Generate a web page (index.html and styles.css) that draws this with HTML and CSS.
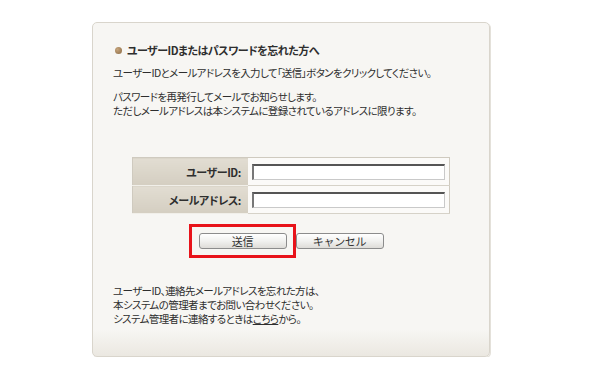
FILE: index.html
```html
<!DOCTYPE html>
<html lang="ja">
<head>
    <meta charset="UTF-8">
    <meta name="viewport" content="width=device-width, initial-scale=1.0">
    <title>パスワード再発行</title>
    <link rel="stylesheet" href="styles.css">
</head>
<body>
    <div class="panel">
        <h2 class="title"><span class="dot"></span>ユーザーIDまたはパスワードを忘れた方へ</h2>
        <p class="lead">ユーザーIDとメールアドレスを入力して「送信」ボタンをクリックしてください。</p>
        <p class="note">パスワードを再発行してメールでお知らせします。<br>ただしメールアドレスは本システムに登録されているアドレスに限ります。</p>

        <table class="form">
            <tr>
                <th>ユーザーID:</th>
                <td><input type="text" class="field"></td>
            </tr>
            <tr>
                <th>メールアドレス:</th>
                <td><input type="text" class="field"></td>
            </tr>
        </table>

        <div class="buttons">
            <span class="mark"><button class="btn">送信</button></span>
            <button class="btn">キャンセル</button>
        </div>

        <p class="help">ユーザーID、連絡先メールアドレスを忘れた方は、<br>本システムの管理者までお問い合わせください。<br>システム管理者に連絡するときは<a href="#">こちら</a>から。</p>
    </div>
</body>
</html>
```

FILE: styles.css
```css
body {
    margin: 0;
    padding: 0;
    background: #fff;
    font-family: "Noto Sans CJK JP", "Noto Sans", sans-serif;
    font-size: 10.5px;
    letter-spacing: -0.6px;
    color: #2e2e2e;
    font-feature-settings: "palt";
}

.panel {
    box-sizing: border-box;
    width: 398px;
    height: 335px;
    margin: 22px 0 0 92px;
    padding: 19px 20px 0 20px;
    background: linear-gradient(#f7f6f3 0, #f7f6f3 92%, #ebe8e1 100%);
    border: 1px solid #d9d5cc;
    border-radius: 5px;
    box-shadow: 1px 1px 0 #e4e1da;
}

.panel p {
    white-space: nowrap;
}

.title {
    display: flex;
    align-items: center;
    margin: 0;
    font-size: 11px;
    letter-spacing: -0.5px;
    font-weight: bold;
    line-height: 16px;
    height: 16px;
}

.dot {
    width: 7px;
    height: 7px;
    margin: 0 5px 0 2px;
    border-radius: 50%;
    background: radial-gradient(circle at 35% 35%, #c7a57c, #8a6a44);
}

.lead {
    margin: 8px 0 0;
    line-height: 14px;
}

.note {
    margin: 10px 0 0;
    line-height: 14px;
}

.form {
    width: 318px;
    margin: 39px auto 0;
    border-collapse: collapse;
    border: 1px solid #cfcabf;
}

.form th {
    width: 114px;
    height: 27px;
    padding: 0 7px 0 0;
    text-align: right;
    font-size: 11px;
    letter-spacing: -0.4px;
    font-weight: bold;
    background: linear-gradient(#e2ddd2, #d4cec1);
    border-bottom: 1px solid #f1efe9;
}

.form td {
    padding: 0 4px;
    background: #fbfaf8;
    border-bottom: 1px solid #d6d2c8;
}

.field {
    box-sizing: border-box;
    width: 193px;
    height: 16px;
    margin: 0;
    border: 1px solid #c9c9c9;
    border-top: 2px solid #555;
    border-left: 2px solid #777;
    background: #fff;
}

.buttons {
    display: flex;
    justify-content: center;
    gap: 9px;
    margin-top: 19px;
}

.mark {
    position: relative;
    display: flex;
}

.mark::after {
    content: "";
    position: absolute;
    left: -10px;
    top: -9px;
    width: 101px;
    height: 28px;
    border: 3px solid #e8131a;
}

.btn {
    width: 89px;
    height: 16px;
    padding: 0;
    font-family: inherit;
    font-size: 11px;
    letter-spacing: -0.3px;
    line-height: 13px;
    color: #333;
    background: linear-gradient(#ffffff, #f1f1ef 50%, #dedcd8);
    border: 1px solid #8c8c8c;
    border-radius: 3px;
    cursor: pointer;
}

.buttons .btn:last-child {
    width: 88px;
}

.help {
    margin: 35px 0 0;
    line-height: 14px;
}

.help a {
    color: #2e2e2e;
}
```
